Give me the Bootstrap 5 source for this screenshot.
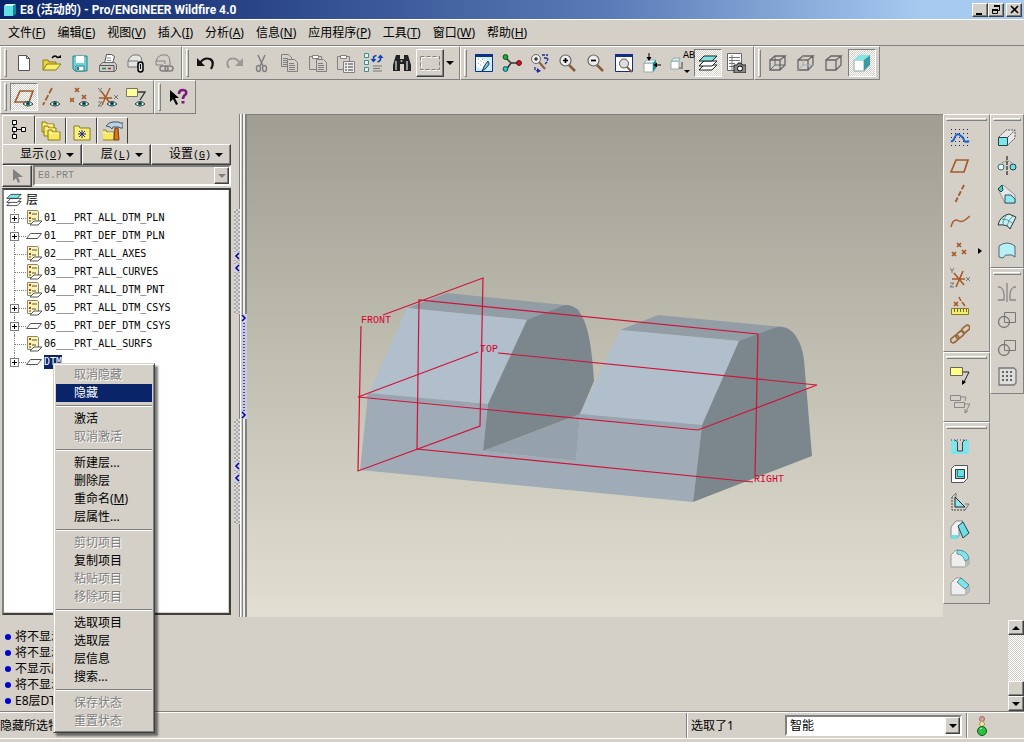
<!DOCTYPE html>
<html lang="zh-CN">
<head>
<meta charset="utf-8">
<meta name="viewport" content="width=device-width, initial-scale=1">
<title>E8 (活动的) - Pro/ENGINEER Wildfire 4.0</title>
<link href="https://cdn.jsdelivr.net/npm/bootstrap@5.3.0/dist/css/bootstrap.min.css" rel="stylesheet">
<style>
:root{--face:#d4d0c8;--shade:#808080;--dark:#404040;--navy:#0a246a}
body{font-family:"Noto Sans","Noto Sans CJK SC",sans-serif;font-size:12px;line-height:18px;background:var(--face);color:#000}
button{font:inherit;color:inherit;border:0;padding:0;background:none}
u{text-underline-offset:1px}
.mono{font-family:"Liberation Mono","Noto Sans CJK SC",monospace;font-size:10px}
.titlebar{height:19px;background:linear-gradient(90deg,#0a246a 0%,#2a4687 25%,#5b7cb8 60%,#a6caf0 90%);color:#fff;font-family:Roboto,"Noto Sans CJK SC",sans-serif;font-weight:700;padding:0 2px 0 4px}
.winbtn{width:16px;height:14px}
.restore{margin-right:2px}
.raised{background:var(--face);border:1px solid;border-color:#fff var(--dark) var(--dark) #fff;box-shadow:inset -1px -1px 0 var(--shade)}
.menubar{height:27px;border-top:1px solid #fff;border-bottom:1px solid var(--shade);padding:0 2px}
.menubar a{color:#000;text-decoration:none;padding:0 6px}
.toolgroup{height:34px;border:1px solid;border-color:#fff var(--shade) var(--shade) #fff;padding:2px 3px}
.grip{width:3px;height:28px;margin-right:3px;border:1px solid;border-color:#fff var(--shade) var(--shade) #fff;flex:none}
.tool{width:28px;height:28px;flex:none;display:flex;align-items:center;justify-content:center}
.tool.sunk{border:1px solid;border-color:var(--shade) #fff #fff var(--shade);background:repeating-conic-gradient(#fff 0 25%,#d4d0c8 0 50%) 0 0/2px 2px}
.ic{width:20px;height:20px;flex:none;overflow:visible}
.ab{position:absolute;right:-1px;top:3px;line-height:8px}
.down{width:12px}
.caret{width:0;height:0;border:4px solid transparent;border-top-color:#000;border-bottom:0;flex:none}
.caret.up{border:4px solid transparent;border-bottom-color:#000;border-top:0}
.vgroup{border:1px solid;border-color:#fff var(--shade) var(--shade) #fff;padding:3px 2px}
.vgrip{height:3px;margin-bottom:3px;border:1px solid;border-color:#fff var(--shade) var(--shade) #fff}
.rail-a{width:47px}.rail-b{width:34px}
.side{width:232px;padding:1px 1px 2px 2px}
.tabbtn{width:31px;height:27px;border:1px solid;border-color:#fff var(--dark) transparent #fff;border-radius:2px 2px 0 0;display:flex;align-items:center;justify-content:center}
.tabbtn.on{width:33px;height:29px}
.panelbtn{height:21px;gap:4px;display:flex;align-items:center;justify-content:flex-end;padding-right:7px}
.pickrow{gap:1px;margin-bottom:1px}
.combo{position:relative;height:21px}
.combo select{appearance:none;width:100%;height:100%;border:2px solid;border-color:var(--shade) #fff #fff var(--shade);background:#fff;color:#000;opacity:1;padding:0 3px;font-family:inherit;font-size:12px;border-radius:0}
.combo select:disabled{background:var(--face);color:var(--shade);font-family:"Liberation Mono",monospace;font-size:10px}
.combo .arrow{position:absolute;right:2px;top:2px;bottom:2px;width:15px;pointer-events:none;display:flex;align-items:center;justify-content:center}
.combo select:disabled+.arrow .caret{border-top-color:var(--shade)}
.tree{background:#fff;border:2px solid;border-color:var(--dark) var(--dark) var(--dark) var(--shade);box-shadow:inset -1px -1px 0 var(--face);padding:1px 2px;position:relative}
.tree li{height:18px;display:flex;align-items:center;position:relative}
.tree li::before{content:"";position:absolute;left:8px;top:0;height:18px;border-left:1px dotted var(--shade)}
.tree li:last-child::before{height:9px}
.tree li::after{content:"";position:absolute;left:9px;top:9px;width:11px;border-top:1px dotted var(--shade)}
.plus{position:absolute;left:4px;top:5px;width:9px;height:9px;border:1px solid var(--shade);background:linear-gradient(#000,#000) center/5px 1px no-repeat,linear-gradient(#000,#000) center/1px 5px no-repeat,#fff;z-index:1}
.tree .ti{width:16px;height:16px;margin-left:20px;margin-right:2px;flex:none}
.tree .name{font-family:"DejaVu Sans Mono",monospace;font-size:10px;line-height:14px}
.tree .name.sel{background:var(--navy);color:#fff}
.ctx{position:absolute;left:47px;top:10px;width:102px;z-index:10;background:var(--face);border:1px solid;border-color:var(--face) var(--dark) var(--dark) var(--face);box-shadow:inset 1px 1px 0 #fff,inset -1px -1px 0 var(--shade),3px 3px 2px rgba(0,0,0,.5);padding:2px}
.ctx button{display:block;width:100%;height:18px;text-align:left;padding-left:18px;white-space:nowrap}
.ctx button:disabled{color:var(--shade);text-shadow:1px 1px 0 #fff}
.ctx button.hot{background:var(--navy);color:#fff}
.ctx hr{margin:3px 0;border:0;border-top:1px solid var(--shade);border-bottom:1px solid #fff;opacity:1;height:2px}
.splitter{width:15px;border-right:1px solid var(--shade);padding-top:95px}
.knurl{width:6px;height:105px;margin-left:2px;background:repeating-conic-gradient(#a6a6aa 0 25%,#dedbd4 0 50%) 0 0/4px 4px;display:flex;flex-direction:column;align-items:center;justify-content:center;gap:4px}
.knurl.blue{margin-left:9px;background:repeating-linear-gradient(#4040a8 0 1px,transparent 1px 3px) center/2px 100% no-repeat,#c8cae0;justify-content:space-between}
.rails{width:7px;border-left:1px solid var(--shade);border-right:1px solid var(--shade);box-shadow:inset 1px 0 0 #fff,inset -2px 0 0 #eee,inset -3px 0 0 var(--shade);position:absolute;top:0;bottom:0;right:0}
.chev{width:6px;height:8px;flex:none;background:#d0d0e4}
.canvas{background:linear-gradient(#a09d92,#e2dfd2);border-top:1px solid var(--shade);min-width:0}
.canvas text{font-family:"Liberation Mono",monospace;font-size:10px;fill:#d8002c}
.msgs{height:95px;border-bottom:1px solid var(--shade)}
.msgs ul{padding:12px 0 0 5px}
.msgs li{height:16px;line-height:16px;display:flex;align-items:center;gap:4px}
.dot{width:6px;height:6px;border-radius:50%;background:#0000d0}
.sbar{width:16px;margin-top:3px;background:repeating-conic-gradient(#fff 0 25%,#d4d0c8 0 50%) 0 0/2px 2px}
.sbar button{width:16px;height:15px;display:flex;align-items:center;justify-content:center}
.status{height:27px;border-top:1px solid #fff;border-bottom:1px solid #fff;margin-bottom:3px}
.vr3{border-left:1px solid var(--shade);box-shadow:inset 1px 0 0 #fff;width:2px}
.picked{width:336px}
.picked label{width:97px;padding-left:3px}
.lamp{margin:0 36px 0 8px}
</style>
</head>
<body>
<svg width="0" height="0" class="position-absolute">
<defs>
<g id="eye"><path d="M0 3Q5-2 10 3Q5 7 0 3Z" fill="#fff" stroke="#333"/><circle cx="5" cy="2.600" r="2.200" fill="#14807a"/><circle cx="5" cy="2.600" r="1" fill="#023"/></g>
<g id="xx" fill="none" stroke="#a65a28" stroke-width="1.700"><path d="M0 0l4 4M4 0l-4 4"/></g>
<g id="docs" fill="#d4d0c8" stroke="#808080"><path d="M.5.500h7l3 3v9h-10z"/><path d="M2 4.500h5M2 6.500h6M2 8.500h6M2 10.500h6"/></g>
<g id="glass"><path d="M11 12l6 6" stroke="#8a5a3a" stroke-width="2.500"/><circle cx="7.500" cy="7.500" r="5.500" fill="#eee" stroke="#666" stroke-width="1.200"/></g>
<g id="fold"><path d="M0 2h4l1 2h7v8H0z" fill="#f7e85c" stroke="#8a7a1a"/><path d="M1 5h10" stroke="#fffbc0"/></g>
<g id="cubew" fill="none" stroke="#666" stroke-width="1.300"><path d="M2 7h10v10H2zM2 7l5-4h10l-5 4M17 3v9l-5 5"/></g>
</defs>
<symbol id="new" viewBox="0 0 20 20"><path d="M4.500 2.500h8l3 3v12h-11z" fill="#fff" stroke="#555"/><path d="M12.500 2.500v3h3" fill="none" stroke="#555"/></symbol>
<symbol id="open" viewBox="0 0 20 20"><path d="M1 17V7h5l1 2h7v2" fill="#e8d43a" stroke="#8a7a1a"/><path d="M1 17l4-6h14l-5 6z" fill="#f9ee6c" stroke="#8a7a1a"/><path d="M10 5q3-4 6 0" fill="none" stroke="#000" stroke-width="1.300"/><path d="M14 5h5v-3z"/></symbol>
<symbol id="save" viewBox="0 0 20 20"><path d="M3 3h14v15H5l-2-2z" fill="#6fd3dc" stroke="#2a7a86"/><path d="M6 3h8v7H6z" fill="#fff"/><path d="M6 13h8v5H6z" fill="#e8ffff" stroke="#2a7a86"/><path d="M8 14v3" stroke="#2a7a86" stroke-width="2"/></symbol>
<symbol id="print" viewBox="0 0 20 20"><path d="M6.500 10.500l2-9h5l3 2-2 7z" fill="#fff" stroke="#555"/><path d="M9 5h4M9 7.500h4" stroke="#888"/><path d="M1.500 12.500l3-3h12l2 2v5l-2 2h-15z" fill="#ccc" stroke="#666"/><path d="M2 12.500h14v6" fill="none" stroke="#555"/><path d="M4 15.500h4" stroke="#2a8a2a" stroke-width="1.500"/><path d="M10 15.500h3" stroke="#b02020" stroke-width="1.500"/></symbol>
<symbol id="mail" viewBox="0 0 20 20"><path d="M2 12V8q1-4 5-6h6q3 2 3 7v5H2z" fill="#e4e4e4" stroke="#777"/><path d="M2 8h10v6" fill="none" stroke="#777"/><rect x="12" y="9" width="5" height="10" rx="2.500" fill="#ddd" stroke="#000" stroke-width="1.500"/><path d="M14.500 11v5" stroke="#000"/></symbol>
<symbol id="link" viewBox="0 0 20 20"><path d="M2 12V8q1-4 5-6h6q3 2 3 7v3" fill="none" stroke="#808080"/><path d="M2 12h7M2 8h9v3" fill="none" stroke="#808080"/><g fill="none" stroke="#808080" stroke-width="1.500"><rect x="6" y="13" width="8" height="5" rx="2.500"/><rect x="11" y="13" width="8" height="5" rx="2.500"/></g></symbol>
<symbol id="undo" viewBox="0 0 20 20"><path d="M4 10q4-6 10-4q5 3 1 10" fill="none" stroke="#111" stroke-width="2.200"/><path d="M1 5v8h8z" fill="#111"/></symbol>
<symbol id="redo" viewBox="0 0 20 20"><path d="M16 10q-4-6-10-4q-5 3-1 9" fill="none" stroke="#999" stroke-width="2"/><path d="M19 5v8h-8z" fill="#999"/></symbol>
<symbol id="cut" viewBox="0 0 20 20"><g fill="none" stroke="#808080" stroke-width="1.500"><path d="M6 2l5 11M13 2L8 13"/><ellipse cx="6.500" cy="15.500" rx="2" ry="3"/><ellipse cx="12.500" cy="15.500" rx="2" ry="3"/></g></symbol>
<symbol id="copy" viewBox="0 0 20 20"><use href="#docs" x="1" y="1"/><use href="#docs" x="7" y="6"/></symbol>
<symbol id="paste" viewBox="0 0 20 20"><path d="M1.500 3.500h12v13h-12z" fill="#d4d0c8" stroke="#808080"/><path d="M4.500 5.500v-3h6v3z" fill="#fff" stroke="#808080"/><use href="#docs" x="8" y="6"/></symbol>
<symbol id="paste2" viewBox="0 0 20 20"><path d="M1.500 3.500h12v13h-12z" fill="#d4d0c8" stroke="#808080"/><path d="M4.500 5.500v-3h6v3z" fill="#fff" stroke="#808080"/><path d="M7.500 8.500h11v11h-11z" fill="#eee" stroke="#808080"/><path d="M9 11h2M9 14h2M9 17h2M12 11h5M12 14h5M12 17h5" stroke="#777" stroke-width="1.500"/></symbol>
<symbol id="regen" viewBox="0 0 20 20"><g fill="#d8f4f4" stroke="#4a8a8a"><path d="M.5.500h4v4h-4zM.5 7.500h4v4h-4zM.5 14.500h4v4h-4z"/></g><path d="M9.500 8V5q0-2 3-2.500M16.500 3v3q0 2-3 3" fill="none" stroke="#1444b4" stroke-width="1.700"/><path d="M6.500 6h6l-3 3.500zM13.500 5h6l-3-3.500z" fill="#1444b4"/><path d="M9 13h9M9 15.500h7M9 18h9" stroke="#777"/></symbol>
<symbol id="bino" viewBox="0 0 20 20"><path d="M4 2h4v4h4V2h4l3 10v6h-7v-7H8v7H1v-6z" fill="#222"/><path d="M4 8v9M15 8v9M9.500 7v2" stroke="#bbb" stroke-width="1.500"/></symbol>
<symbol id="marq" viewBox="0 0 20 20"><path d="M1.500 4.500h19v13h-19z" fill="none" stroke="#fff" stroke-dasharray="4 2"/><path d="M.5 3.500h19v13H.5z" fill="none" stroke="#808080" stroke-dasharray="4 2"/></symbol>
<symbol id="repaint" viewBox="0 0 20 20"><path d="M1.500 1.500h17v17h-17z" fill="#c9f0fb" stroke="#0f2f86"/><path d="M1 1h18v3H1z" fill="#0f2f86"/><path d="M2 4l15 4-8 9-7-4z" fill="#fff"/><path d="M4 6l10 7M4 10l7 5M8 6l7 4" stroke="#49a" stroke-dasharray="1 2"/><path d="M14 8q3 3-3 8l-3 2 3-6z" fill="#8bd" stroke="#135"/></symbol>
<symbol id="csys" viewBox="0 0 20 20"><path d="M3 4l6 6h8M9 10l-5 7" fill="none" stroke="#333" stroke-width="1.500"/><circle cx="3.500" cy="4" r="2.400" fill="#18b030" stroke="#0a5010"/><circle cx="3.500" cy="16" r="2.400" fill="#30c8c0" stroke="#0a5050"/><circle cx="17" cy="10" r="2.400" fill="#c81830" stroke="#600"/></symbol>
<symbol id="orient" viewBox="0 0 20 20"><path d="M9 9l6 7" stroke="#8a5a3a" stroke-width="2"/><circle cx="6" cy="6" r="4.500" fill="#eee" stroke="#666"/><path d="M6 4v4M4 6h4" stroke="#000"/><path d="M12 2h6M14 5h4l-1 4-2 2M5 14q-1 4 4 4" fill="none" stroke="#1a2a9a" stroke-width="1.300" stroke-dasharray="3 1"/><path d="M7 15l4 3-4 2z" fill="#1a2a9a"/></symbol>
<symbol id="zin" viewBox="0 0 20 20"><use href="#glass"/><path d="M5 7.500h5M7.500 5v5" stroke="#000" stroke-width="1.700"/></symbol>
<symbol id="zout" viewBox="0 0 20 20"><use href="#glass"/><path d="M5 7.500h5" stroke="#000" stroke-width="1.700"/></symbol>
<symbol id="refit" viewBox="0 0 20 20"><path d="M1.500 1.500h17v17h-17z" fill="#fff" stroke="#0f2f86"/><path d="M1 1h18v3H1z" fill="#0f2f86"/><path d="M12 13l6 6" stroke="#8a5a3a" stroke-width="2"/><circle cx="10" cy="10.500" r="4.500" fill="#ddd" stroke="#555"/></symbol>
<symbol id="reor" viewBox="0 0 20 20"><path d="M2 10h9v9H2z" fill="#fff" stroke="#9aa"/><path d="M2 10l3-3h9l-3 3z" fill="#e8ffff" stroke="#9aa"/><path d="M14 7v8l-3 4v-9z" fill="#1f8f96"/><path d="M7 0v5M19 12h-5" stroke="#000"/><path d="M4.500 4h5L7 8zM15 9.500v5L11.500 12z"/></symbol>
<symbol id="saved" viewBox="0 0 20 20"><path d="M1 8h8v8H1z" fill="#fff" stroke="#9aa"/><path d="M1 8l3-3h6l-1 3z" fill="#c8f6f4" stroke="#9aa"/><path d="M12 9v5M9 15h4" stroke="#888" stroke-width="2"/><path d="M14 17h6l-3 3z"/></symbol>
<symbol id="layers" viewBox="0 0 20 20"><g stroke="#222"><path d="M1 17l5-5h13l-5 5z" fill="#fff"/><path d="M1 13l5-5h13l-5 5z" fill="#fff"/><path d="M1 8l5-5h13l-5 5z" fill="#7fe4e6"/></g></symbol>
<symbol id="vmgr" viewBox="0 0 20 20"><path d="M1.500.500h14v17h-14z" fill="#fff" stroke="#666"/><path d="M3 4.500h11M3 7.500h11M3 10.500h6M3 13.500h5M6 2v15" stroke="#777"/><path d="M8 12h3l1-2h3l1 2h4v8H8z" fill="#888" stroke="#222"/><circle cx="14" cy="15.500" r="2.500" fill="#fff" stroke="#000"/></symbol>
<symbol id="wire" viewBox="0 0 20 20"><use href="#cubew"/><path d="M7 3v9M7 12h10M7 12l-5 5" fill="none" stroke="#666"/></symbol>
<symbol id="hidden" viewBox="0 0 20 20"><use href="#cubew"/><path d="M7 3v9l-5 5M7 12h10" fill="none" stroke="#aaa"/></symbol>
<symbol id="nohid" viewBox="0 0 20 20"><use href="#cubew"/></symbol>
<symbol id="shade" viewBox="0 0 20 20"><path d="M2 7h10v11H2z" fill="#fff" stroke="#8aa"/><path d="M2 7l5-5h11l-6 5z" fill="#7fe8ea"/><path d="M18 2v10l-6 6V7z" fill="#3a9ca2"/></symbol>
<symbol id="dplane" viewBox="0 0 20 20"><path d="M6 4h13l-4 11H1z" fill="none" stroke="#a65a28" stroke-width="1.700"/><use href="#eye" x="9" y="14"/></symbol>
<symbol id="daxis" viewBox="0 0 20 20"><path d="M10 1L1 18" stroke="#a65a28" stroke-width="1.800" stroke-dasharray="6 2"/><use href="#eye" x="8" y="14"/></symbol>
<symbol id="dpnt" viewBox="0 0 20 20"><use href="#xx" x="5" y="1"/><use href="#xx" x="0" y="11"/><use href="#xx" x="12" y="8"/><use href="#eye" x="9" y="14"/></symbol>
<symbol id="dcsys" viewBox="0 0 20 20"><path d="M3 4l9 12M12 1L4 18M1 11h13" stroke="#a65a28" stroke-width="1.500"/><path d="M0 1l2 2 2-2M2 3v2M0 15h4l-4 4h4M16 8l4 4M20 8l-4 4" stroke="#777" fill="none"/><use href="#eye" x="9" y="14"/></symbol>
<symbol id="dnote" viewBox="0 0 20 20"><path d="M.5 1.500h11v8h-11z" fill="#ffff9a" stroke="#776"/><path d="M12 5h7l-5 8" fill="none" stroke="#333" stroke-width="1.300"/><use href="#eye" x="9" y="14"/></symbol>
<symbol id="help" viewBox="0 0 20 20"><path d="M2 3v12l3-3 3 6 2-1-3-6h4z"/><path d="M11 7q0-4 4-4q4 0 3 4q-3 2-3 5" fill="none" stroke="#7a1a7a" stroke-width="2.600"/><path d="M13.500 14h3v2.500h-3z" fill="#7a1a7a"/></symbol>
<symbol id="t-tree" viewBox="0 0 20 20"><path d="M5 3v13M5 9.500h9" stroke="#000"/><g fill="#fff" stroke="#000"><path d="M3.500.500h4v4h-4zM3.500 7.500h4v4h-4zM3.500 14.500h4v4h-4zM12.500 7.500h4v4h-4z"/></g></symbol>
<symbol id="t-folds" viewBox="0 0 20 20"><use href="#fold" x="1" y="-1"/><use href="#fold" x="3" y="3"/><use href="#fold" x="7" y="7"/></symbol>
<symbol id="t-fav" viewBox="0 0 20 20"><path d="M2 5h5l1 2h10v12H2z" fill="#fbf07a" stroke="#8a7a1a"/><path d="M10 9v8M6 13h8M7 10l6 6M13 10l-6 6" stroke="#1a2a8a"/></symbol>
<symbol id="t-ham" viewBox="0 0 20 20"><use href="#fold" x="-1" y="7"/><path d="M12 7h3l1 12h-5z" fill="#d87818" stroke="#7a3a08"/><path d="M3 5q3-4 7-4h6l1 1h3v5h-3l-1-1h-6l-1 2-2-2z" fill="#b8d0e0" stroke="#456"/></symbol>
<symbol id="ar" viewBox="0 0 20 20"><path d="M6 3v12l3-3 2 5 2-1-2-5h5z" fill="#808080"/></symbol>
<symbol id="l-rule" viewBox="0 0 16 16"><path d="M1.500.500h10l1 1v12h-11z" fill="#fbf3b4" stroke="#8a8a6a"/><path d="M3 3h2M3 8h2" stroke="#a42" stroke-width="2"/><path d="M6 4h5M6 9h4M3 11h2" stroke="#555"/><path d="M4 15l4-4h8l-4 4z" fill="#fff" stroke="#555"/></symbol>
<symbol id="l-flat" viewBox="0 0 16 16"><path d="M.5 10.500l4-5h11l-4 5z" fill="#fff" stroke="#555"/></symbol>
<symbol id="r-sk" viewBox="0 0 20 20"><path d="M1 1.500h18M1 5.500h18M1 9.500h18M1 13.500h18M1 17.500h18" stroke="#224" stroke-dasharray="1 3"/><path d="M1 13q2 1 4-4t6-1q2 1 3 4t5 1" fill="none" stroke="#1a62d0" stroke-width="2"/></symbol>
<symbol id="r-pl" viewBox="0 0 20 20"><path d="M6 4h12l-4 12H1z" fill="none" stroke="#a65a28" stroke-width="1.700"/></symbol>
<symbol id="r-ax" viewBox="0 0 20 20"><path d="M14 1L5 19" stroke="#a65a28" stroke-width="1.800" stroke-dasharray="5 2"/></symbol>
<symbol id="r-cv" viewBox="0 0 20 20"><path d="M1 15q2-8 6-7 4 3 8 0l5-4" fill="none" stroke="#a65a28" stroke-width="1.500"/></symbol>
<symbol id="r-pt" viewBox="0 0 20 20"><use href="#xx" x="7" y="3"/><use href="#xx" x="2" y="12"/><use href="#xx" x="12" y="10"/></symbol>
<symbol id="r-cs" viewBox="0 0 20 20"><path d="M4 5l10 12M13 3L6 19M2 11h13" stroke="#a65a28" stroke-width="1.600"/><path d="M0 0l2 3 2-3M2 3v2M0 15h4l-4 4h4M16 9l4 4M20 9l-4 4" stroke="#777" fill="none"/></symbol>
<symbol id="r-an" viewBox="0 0 20 20"><use href="#xx" x="4" y="6"/><path d="M9 1l2 4M12 6l3 4" stroke="#a65a28" stroke-width="1.500"/><path d="M1.500 12.500h17v6h-17z" fill="#f4ee6a" stroke="#887a20"/><path d="M4.500 13v3M7.500 13v3M10.500 13v3M13.500 13v3M16.500 13v3" stroke="#665"/></symbol>
<symbol id="r-ch" viewBox="0 0 20 20"><g fill="none" stroke="#9a6a3a" stroke-width="1.700"><rect x="0" y="13" width="9" height="5" rx="2.500" transform="rotate(-40 4 15)"/><rect x="5" y="8" width="9" height="5" rx="2.500" transform="rotate(-40 10 10)"/><rect x="11" y="3" width="9" height="5" rx="2.500" transform="rotate(-40 15 5)"/></g></symbol>
<symbol id="r-n1" viewBox="0 0 20 20"><path d="M.5 1.500h12v8h-12z" fill="#ffff8a" stroke="#665"/><path d="M13 6h6l-6 12" fill="none" stroke="#222"/><path d="M12 19v-5l4 2z"/></symbol>
<symbol id="r-n2" viewBox="0 0 20 20"><path d="M.5 1.500h10v5h-10zM4.500 8.500h10v5h-10zM11 3h5l-1 4M15 10h5l-5 9m0 0v-4m0 4l3-2" fill="none" stroke="#888"/></symbol>
<symbol id="r-hole" viewBox="0 0 20 20"><path d="M1 4h5l2 2v9h4V6l2-2h5v14H1z" fill="#7fe4ec"/><path d="M5 4l2.500 2v9h5V6L15 4" fill="none" stroke="#345"/><path d="M1 4h18" stroke="#345" stroke-dasharray="1 2"/></symbol>
<symbol id="r-shell" viewBox="0 0 20 20"><path d="M1.500 4.500l3-3h13v13l-4 4h-12z" fill="#fff" stroke="#555"/><path d="M5.500 5.500h9v9h-9z" fill="#6fdde4" stroke="#333"/><path d="M7.500 5.500v7h7" fill="none" stroke="#377"/></symbol>
<symbol id="r-rib" viewBox="0 0 20 20"><path d="M2 5v13h13" fill="none" stroke="#444" stroke-dasharray="2 1"/><path d="M5 5l10 10H5z" fill="#8fe8ec" stroke="#222"/><path d="M2 5l4-4v4M15 18l4-6h-4" fill="none" stroke="#777"/></symbol>
<symbol id="r-draft" viewBox="0 0 20 20"><path d="M1 7l5-6h7l-4 6v9l-2 2H1z" fill="#f2f2f2" stroke="#888"/><path d="M1 15h8l-2 4H1z" fill="#6fdde4"/><path d="M8 6l5-4 6 11-6 5z" fill="#6fdde4" stroke="#245"/></symbol>
<symbol id="r-round" viewBox="0 0 20 20"><path d="M1 7l5-5 7 1 6 9v4l-4 3H1z" fill="#eee" stroke="#999"/><path d="M15 12l4-2v6l-4 3z" fill="#bbb"/><path d="M7 2q11 0 12 9l-4 2Q13 6 7 6z" fill="#7fe4ec" stroke="#477" stroke-width=".7"/></symbol>
<symbol id="r-cham" viewBox="0 0 20 20"><path d="M1 7l5-5h5l8 8v6l-4 3H1z" fill="#eee" stroke="#999"/><path d="M15 12l4-2v6l-4 3z" fill="#bbb"/><path d="M11 2l8 7-4 4-8-7z" fill="#7fe4ec" stroke="#266" stroke-width=".7"/></symbol>
<symbol id="s-ext" viewBox="0 0 20 20"><path d="M2 9l7-7h9v8l-7 7V9z" fill="#e6e6e6"/><path d="M2 9l7-7h9M11 9l7-7v8l-7 7" fill="none" stroke="#555" stroke-dasharray="2 1"/><path d="M1.500 9.500h9v8h-9z" fill="#7fe4ec" stroke="#244"/></symbol>
<symbol id="s-rev" viewBox="0 0 20 20"><path d="M10 0v20" stroke="#000" stroke-dasharray="4 1"/><circle cx="4" cy="11" r="3" fill="#d8ffff" stroke="#466"/><circle cx="16" cy="11" r="3" fill="#6fdde4" stroke="#244"/><path d="M5 7q5-4 10 0" fill="none" stroke="#777" stroke-dasharray="2 1"/></symbol>
<symbol id="s-swp" viewBox="0 0 20 20"><path d="M1 5l5-4 12 10v8H8z" fill="#e6e6e6" stroke="#777" stroke-width=".7"/><path d="M1 5l4-4 1 5-2 2z" fill="#3fd0c8" stroke="#244"/><path d="M8 11h6l4 4v4H8z" fill="#8fe8ec" stroke="#356"/></symbol>
<symbol id="s-bnd" viewBox="0 0 20 20"><path d="M1 13Q3 4 12 2l7 3-6 12q-2-5-12-4" fill="#c4f4f6" stroke="#333"/><path d="M5 7q6 0 10 4M9 4q-4 4-3 9M16 4q-5 4-6 10" fill="none" stroke="#467" stroke-width=".7"/></symbol>
<symbol id="s-srf" viewBox="0 0 20 20"><path d="M2 6q8-6 16 0v11q-3-3-7-2-3-1-5 3l-4-1z" fill="#b4f0f4" stroke="#567"/></symbol>
<symbol id="s-mir" viewBox="0 0 20 20"><path d="M10 1v19M1 5h2q5 2 4 13H1M19 5h-2q-5 2-4 13h6" fill="none" stroke="#888" stroke-width="1.300"/></symbol>
<symbol id="s-mrg" viewBox="0 0 20 20"><path d="M7.500 2.500h11v10h-11z" fill="none" stroke="#777"/><circle cx="7" cy="12" r="5.500" fill="none" stroke="#777" stroke-width="1.300"/></symbol>
<symbol id="s-pat" viewBox="0 0 20 20"><path d="M2 2h15l2 2v13l-2 2H2z" fill="#ddd" stroke="#777" stroke-width="1.300"/><path d="M5 6h11M5 10h11M5 14h11" stroke="#666" stroke-width="2" stroke-dasharray="2 2"/></symbol>
</svg>

<div class="d-flex flex-column min-vh-100">
<header class="titlebar d-flex align-items-center">
  <svg class="me-1" width="12" height="12" viewBox="0 0 12 12"><path d="M0 2h9v10H0z" fill="#5fe0e4"/><path d="M0 2l2-2h10L9 2z" fill="#d8ffff"/><path d="M12 0v10l-3 2V2z" fill="#168a94"/></svg>
  <span class="flex-grow-1">E8 (活动的) - Pro/ENGINEER Wildfire 4.0</span>
  <button class="raised winbtn d-flex" aria-label="最小化"><svg width="12" height="12"><path d="M3 9h6v2H3z"/></svg></button>
  <button class="raised winbtn restore d-flex" aria-label="还原"><svg width="14" height="12"><path d="M5.500 2v-.5h5v5H9M3.500 5.500h5v4h-5z" fill="none" stroke="#000"/><path d="M5 1h6v2H5zM3 5h6v2H3z"/></svg></button>
  <button class="raised winbtn d-flex" aria-label="关闭"><svg width="14" height="12"><path d="M4 2l7 7M11 2l-7 7" stroke="#000" stroke-width="1.700"/></svg></button>
</header>

<nav class="menubar d-flex align-items-center">
  <a href="#">文件(<u>F</u>)</a><a href="#">编辑(<u>E</u>)</a><a href="#">视图(<u>V</u>)</a><a href="#">插入(<u>I</u>)</a><a href="#">分析(<u>A</u>)</a><a href="#">信息(<u>N</u>)</a><a href="#">应用程序(<u>P</u>)</a><a href="#">工具(<u>T</u>)</a><a href="#">窗口(<u>W</u>)</a><a href="#">帮助(<u>H</u>)</a>
</nav>

<div class="d-flex">
  <div class="toolgroup d-flex"><span class="grip"></span>
    <button class="tool" aria-label="新建"><svg class="ic"><use href="#new"/></svg></button>
    <button class="tool" aria-label="打开"><svg class="ic"><use href="#open"/></svg></button>
    <button class="tool" aria-label="保存"><svg class="ic"><use href="#save"/></svg></button>
    <button class="tool" aria-label="打印"><svg class="ic"><use href="#print"/></svg></button>
    <button class="tool" aria-label="发送"><svg class="ic"><use href="#mail"/></svg></button>
    <button class="tool" aria-label="发送链接"><svg class="ic"><use href="#link"/></svg></button>
  </div>
  <div class="toolgroup d-flex"><span class="grip"></span>
    <button class="tool" aria-label="撤消"><svg class="ic"><use href="#undo"/></svg></button>
    <button class="tool" aria-label="重做"><svg class="ic"><use href="#redo"/></svg></button>
    <button class="tool" aria-label="剪切"><svg class="ic"><use href="#cut"/></svg></button>
    <button class="tool" aria-label="复制"><svg class="ic"><use href="#copy"/></svg></button>
    <button class="tool" aria-label="粘贴"><svg class="ic"><use href="#paste"/></svg></button>
    <button class="tool" aria-label="选择性粘贴"><svg class="ic"><use href="#paste2"/></svg></button>
    <button class="tool" aria-label="再生"><svg class="ic"><use href="#regen"/></svg></button>
    <button class="tool" aria-label="查找"><svg class="ic"><use href="#bino"/></svg></button>
    <button class="tool raised" aria-label="框选"><svg class="ic"><use href="#marq"/></svg></button>
    <button class="down d-flex align-items-center justify-content-center" aria-label="框选选项"><span class="caret"></span></button>
  </div>
  <div class="toolgroup d-flex"><span class="grip"></span>
    <button class="tool" aria-label="重画"><svg class="ic"><use href="#repaint"/></svg></button>
    <button class="tool" aria-label="旋转中心"><svg class="ic"><use href="#csys"/></svg></button>
    <button class="tool" aria-label="定向模式"><svg class="ic"><use href="#orient"/></svg></button>
    <button class="tool" aria-label="放大"><svg class="ic"><use href="#zin"/></svg></button>
    <button class="tool" aria-label="缩小"><svg class="ic"><use href="#zout"/></svg></button>
    <button class="tool" aria-label="重新调整"><svg class="ic"><use href="#refit"/></svg></button>
    <button class="tool" aria-label="重定向"><svg class="ic"><use href="#reor"/></svg></button>
    <button class="tool position-relative" aria-label="已保存视图"><svg class="ic"><use href="#saved"/></svg><span class="mono ab">AB</span></button>
    <button class="tool sunk" aria-label="层"><svg class="ic"><use href="#layers"/></svg></button>
    <button class="tool" aria-label="视图管理器"><svg class="ic"><use href="#vmgr"/></svg></button>
  </div>
  <div class="toolgroup d-flex"><span class="grip"></span>
    <button class="tool" aria-label="线框"><svg class="ic"><use href="#wire"/></svg></button>
    <button class="tool" aria-label="隐藏线"><svg class="ic"><use href="#hidden"/></svg></button>
    <button class="tool" aria-label="无隐藏线"><svg class="ic"><use href="#nohid"/></svg></button>
    <button class="tool sunk" aria-label="着色"><svg class="ic"><use href="#shade"/></svg></button>
  </div>
</div>
<div class="d-flex">
  <div class="toolgroup d-flex"><span class="grip"></span>
    <button class="tool sunk" aria-label="基准平面显示"><svg class="ic"><use href="#dplane"/></svg></button>
    <button class="tool" aria-label="基准轴显示"><svg class="ic"><use href="#daxis"/></svg></button>
    <button class="tool" aria-label="基准点显示"><svg class="ic"><use href="#dpnt"/></svg></button>
    <button class="tool" aria-label="坐标系显示"><svg class="ic"><use href="#dcsys"/></svg></button>
    <button class="tool" aria-label="注释显示"><svg class="ic"><use href="#dnote"/></svg></button>
  </div>
  <div class="toolgroup d-flex"><span class="grip"></span>
    <button class="tool" aria-label="帮助"><svg class="ic"><use href="#help"/></svg></button>
  </div>
</div>

<main class="d-flex flex-grow-1">
  <aside class="side d-flex flex-column flex-shrink-0">
    <div class="d-flex align-items-end">
      <button class="tabbtn on" aria-label="模型树"><svg class="ic"><use href="#t-tree"/></svg></button>
      <button class="tabbtn" aria-label="文件夹浏览器"><svg class="ic"><use href="#t-folds"/></svg></button>
      <button class="tabbtn" aria-label="收藏夹"><svg class="ic"><use href="#t-fav"/></svg></button>
      <button class="tabbtn" aria-label="连接"><svg class="ic"><use href="#t-ham"/></svg></button>
    </div>
    <div class="d-flex">
      <button class="raised panelbtn" style="width:35%"><span>显示<span class="mono">(<u>O</u>)</span></span><span class="caret"></span></button>
      <button class="raised panelbtn" style="width:30%"><span>层<span class="mono">(<u>L</u>)</span></span><span class="caret"></span></button>
      <button class="raised panelbtn" style="width:35%"><span>设置<span class="mono">(<u>G</u>)</span></span><span class="caret"></span></button>
    </div>
    <div class="pickrow d-flex">
      <button class="raised d-flex align-items-center justify-content-center px-1" aria-label="选取模型"><svg class="ic"><use href="#ar"/></svg></button>
      <div class="combo flex-grow-1"><select disabled aria-label="活动模型"><option>E8.PRT</option></select><span class="arrow raised"><span class="caret"></span></span></div>
    </div>
    <div class="tree flex-grow-1">
      <div class="d-flex align-items-center"><svg class="me-1" width="16" height="16"><use href="#layers"/></svg>层</div>
      <ul class="list-unstyled m-0">
        <li><span class="plus"></span><svg class="ti"><use href="#l-rule"/></svg><span class="name">01___PRT_ALL_DTM_PLN</span></li>
        <li><span class="plus"></span><svg class="ti"><use href="#l-flat"/></svg><span class="name">01___PRT_DEF_DTM_PLN</span></li>
        <li><svg class="ti"><use href="#l-rule"/></svg><span class="name">02___PRT_ALL_AXES</span></li>
        <li><svg class="ti"><use href="#l-rule"/></svg><span class="name">03___PRT_ALL_CURVES</span></li>
        <li><svg class="ti"><use href="#l-rule"/></svg><span class="name">04___PRT_ALL_DTM_PNT</span></li>
        <li><span class="plus"></span><svg class="ti"><use href="#l-rule"/></svg><span class="name">05___PRT_ALL_DTM_CSYS</span></li>
        <li><span class="plus"></span><svg class="ti"><use href="#l-flat"/></svg><span class="name">05___PRT_DEF_DTM_CSYS</span></li>
        <li><svg class="ti"><use href="#l-rule"/></svg><span class="name">06___PRT_ALL_SURFS</span></li>
        <li><span class="plus"></span><svg class="ti"><use href="#l-flat"/></svg><span class="name sel">DTM</span>
          <div class="ctx">
            <button disabled>取消隐藏</button><button class="hot">隐藏</button><hr>
            <button>激活</button><button disabled>取消激活</button><hr>
            <button>新建层...</button><button>删除层</button><button>重命名(<u>M</u>)</button><button>层属性...</button><hr>
            <button disabled>剪切项目</button><button>复制项目</button><button disabled>粘贴项目</button><button disabled>移除项目</button><hr>
            <button>选取项目</button><button>选取层</button><button>层信息</button><button>搜索...</button><hr>
            <button disabled>保存状态</button><button disabled>重置状态</button>
          </div>
        </li>
      </ul>
    </div>
  </aside>
  <div class="splitter position-relative flex-shrink-0">
    <span class="rails"></span>
    <div class="knurl position-relative"><svg class="chev"><path d="M5 1L2 4l3 3" fill="none" stroke="#0000a0" stroke-width="1.500"/></svg><svg class="chev"><path d="M5 1L2 4l3 3" fill="none" stroke="#0000a0" stroke-width="1.500"/></svg></div>
    <div class="knurl blue position-relative"><svg class="chev"><path d="M1 1l3 3-3 3" fill="none" stroke="#0000a0" stroke-width="1.500"/></svg><svg class="chev"><path d="M1 1l3 3-3 3" fill="none" stroke="#0000a0" stroke-width="1.500"/></svg></div>
    <div class="knurl position-relative"><svg class="chev"><path d="M5 1L2 4l3 3" fill="none" stroke="#0000a0" stroke-width="1.500"/></svg><svg class="chev"><path d="M5 1L2 4l3 3" fill="none" stroke="#0000a0" stroke-width="1.500"/></svg></div>
  </div>
  <section class="canvas flex-grow-1 position-relative">
    <svg class="position-absolute top-0 start-0 w-100 h-100" viewBox="247 115 696 502">
      <path d="M368 394L488 404L483 451L576 461L580 414L702 425L693 502L360 470z" fill="#9fabb6"/>
      <path d="M483 451L580 414L576 461z" fill="#95a1ab"/>
      <path d="M407 308L447 293L565 305Q575 306 580 311L527 320z" fill="#929da6"/>
      <path d="M407 308L527 320L488 404L369 393z" fill="#b0bfcb"/>
      <path d="M369 393L488 404L487 408L366 397z" fill="#98a4b0"/>
      <path d="M527 320L565 305C585 304 591 335 594 381L580 414L483 451L488 404z" fill="#7b878d"/>
      <path d="M620 330L658 315L783 327L739 341z" fill="#929da6"/>
      <path d="M620 330L739 341L702 425L580 414L594 385z" fill="#b0bfcb"/>
      <path d="M580 414L702 425L701 429L580 418z" fill="#98a4b0"/>
      <path d="M739 341L777 327C795 325 802 345 804 360L812 456L693 502L702 425z" fill="#7b878d"/>
      <g fill="none" stroke="#d01238" stroke-width="1.200">
        <path d="M383 315L483 278L480 426L358 471L361 326"/>
        <path d="M753 482L417 449L419 300L758 334L755 475"/>
        <path d="M478 352L358 397L698 430L817 385L498 353"/>
      </g>
      <text x="361" y="323">FRONT</text><text x="480" y="352">TOP</text><text x="754" y="482">RIGHT</text>
    </svg>
  </section>
  <div class="rail-a flex-shrink-0">
    <div class="vgroup"><div class="vgrip"></div>
      <button class="tool" aria-label="草绘"><svg class="ic"><use href="#r-sk"/></svg></button>
      <button class="tool" aria-label="基准平面"><svg class="ic"><use href="#r-pl"/></svg></button>
      <button class="tool" aria-label="基准轴"><svg class="ic"><use href="#r-ax"/></svg></button>
      <button class="tool" aria-label="基准曲线"><svg class="ic"><use href="#r-cv"/></svg></button>
      <div class="d-flex"><button class="tool" aria-label="基准点"><svg class="ic"><use href="#r-pt"/></svg></button><button aria-label="更多基准点"><svg width="10" height="10"><path d="M4 2l4 3-4 3z"/></svg></button></div>
      <button class="tool" aria-label="坐标系"><svg class="ic"><use href="#r-cs"/></svg></button>
      <button class="tool" aria-label="分析特征"><svg class="ic"><use href="#r-an"/></svg></button>
      <button class="tool" aria-label="参照"><svg class="ic"><use href="#r-ch"/></svg></button>
    </div>
    <div class="vgroup"><div class="vgrip"></div>
      <button class="tool" aria-label="注释"><svg class="ic"><use href="#r-n1"/></svg></button>
      <button class="tool" aria-label="注释传播"><svg class="ic"><use href="#r-n2"/></svg></button>
    </div>
    <div class="vgroup"><div class="vgrip"></div>
      <button class="tool" aria-label="孔"><svg class="ic"><use href="#r-hole"/></svg></button>
      <button class="tool" aria-label="壳"><svg class="ic"><use href="#r-shell"/></svg></button>
      <button class="tool" aria-label="筋"><svg class="ic"><use href="#r-rib"/></svg></button>
      <button class="tool" aria-label="拔模"><svg class="ic"><use href="#r-draft"/></svg></button>
      <button class="tool" aria-label="倒圆角"><svg class="ic"><use href="#r-round"/></svg></button>
      <button class="tool" aria-label="倒角"><svg class="ic"><use href="#r-cham"/></svg></button>
    </div>
  </div>
  <div class="rail-b flex-shrink-0">
    <div class="vgroup"><div class="vgrip"></div>
      <button class="tool" aria-label="拉伸"><svg class="ic"><use href="#s-ext"/></svg></button>
      <button class="tool" aria-label="旋转"><svg class="ic"><use href="#s-rev"/></svg></button>
      <button class="tool" aria-label="可变剖面扫描"><svg class="ic"><use href="#s-swp"/></svg></button>
      <button class="tool" aria-label="边界混合"><svg class="ic"><use href="#s-bnd"/></svg></button>
      <button class="tool" aria-label="造型"><svg class="ic"><use href="#s-srf"/></svg></button>
    </div>
    <div class="vgroup"><div class="vgrip"></div>
      <button class="tool" aria-label="镜像"><svg class="ic"><use href="#s-mir"/></svg></button>
      <button class="tool" aria-label="合并"><svg class="ic"><use href="#s-mrg"/></svg></button>
      <button class="tool" aria-label="修剪"><svg class="ic"><use href="#s-mrg"/></svg></button>
      <button class="tool" aria-label="阵列"><svg class="ic"><use href="#s-pat"/></svg></button>
    </div>
  </div>
</main>

<section class="msgs d-flex justify-content-between">
  <ul class="list-unstyled m-0">
    <li><span class="dot"></span>将不显示</li><li><span class="dot"></span>将不显示</li><li><span class="dot"></span>不显示层</li><li><span class="dot"></span>将不显示</li><li><span class="dot"></span>E8层DTM</li>
  </ul>
  <div class="sbar d-flex flex-column">
    <button class="raised" aria-label="向上滚动"><span class="caret up"></span></button>
    <button class="raised mt-auto" aria-label="滚动块"></button>
    <button class="raised" aria-label="向下滚动"><span class="caret"></span></button>
  </div>
</section>
<footer class="status d-flex align-items-stretch">
  <span class="flex-grow-1 align-self-center">隐藏所选特征</span>
  <span class="vr3"></span>
  <div class="picked d-flex align-items-center">
    <label for="filter">选取了1</label>
    <div class="combo flex-grow-1">
      <select id="filter"><option>智能</option></select><span class="arrow raised"><span class="caret"></span></span>
    </div>
    <span class="vr3 ms-1 align-self-stretch"></span>
    <svg class="lamp" width="12" height="22" viewBox="0 0 12 22"><circle cx="6" cy="4" r="2.500" fill="#d8a0a0" stroke="#a66"/><circle cx="6" cy="9" r="2.500" fill="#f4e89a" stroke="#a96"/><circle cx="6" cy="16" r="4.500" fill="#2cc040" stroke="#0a5a14"/><path d="M4 14l2-1" stroke="#cfc"/></svg>
  </div>
</footer>
</div>
<script src="https://cdn.jsdelivr.net/npm/bootstrap@5.3.0/dist/js/bootstrap.bundle.min.js"></script>
</body>
</html>
